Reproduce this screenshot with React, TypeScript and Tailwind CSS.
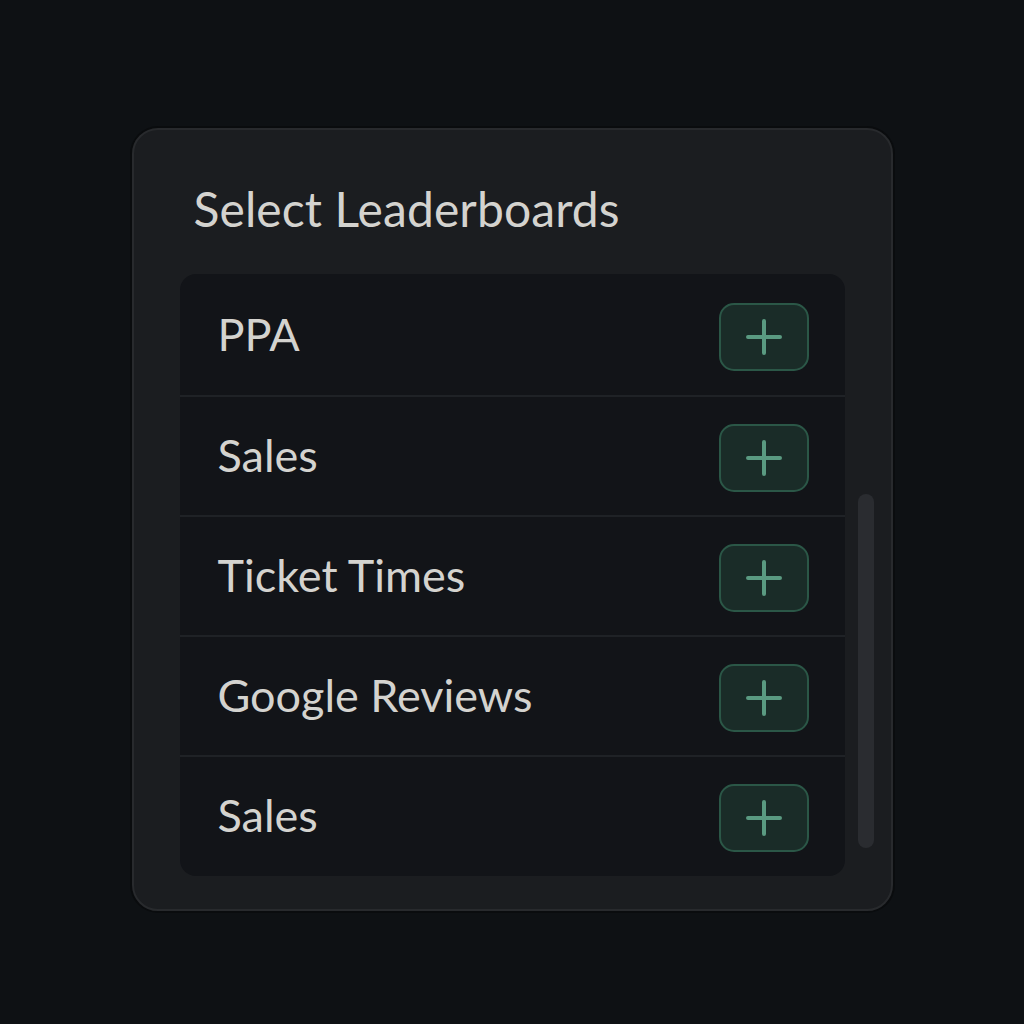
const boards = ['PPA', 'Sales', 'Ticket Times', 'Google Reviews', 'Sales']

function PlusIcon() {
  return (
    <svg width="38" height="38" viewBox="0 0 38 38" fill="none">
      <path d="M19 3v32M3 19h32" stroke="#5a9a81" strokeWidth="4" strokeLinecap="round" />
    </svg>
  )
}

export default function App() {
  return (
    <div
      className="min-h-screen w-full bg-[#0e1114] flex justify-center pt-[128px]"
      style={{ fontFamily: 'Lato, "Noto Sans", sans-serif' }}
    >
      <div className="w-[761px] h-[783px] rounded-[26px] bg-[#1b1d20] border-2 border-[#282a2d] shadow-[0_0_0_2px_#0a0c0e] pt-[55px] pl-[46px] pr-[17px]">
        <h1 className="pl-[14px] h-[48px] leading-[48px] text-[48px] text-[#d4d3cf] tracking-[0.1px]">
          Select Leaderboards
        </h1>
        <div className="flex gap-[13px] mt-[41px]">
          <div className="w-[665px] rounded-[16px] bg-[#121418] overflow-hidden py-[1px]">
            {boards.map((name, i) => (
              <div
                key={i}
                className={
                  'flex items-center justify-between h-[120px] pl-[38px] pr-[36px] ' +
                  (i > 0 ? 'border-t-2 border-[#1f2226]' : '')
                }
              >
                <span className="text-[45px] text-[#d4d3cf]">{name}</span>
                <button
                  type="button"
                  className="w-[90px] h-[68px] mt-[4px] rounded-[15px] bg-[#1a2c28] border-2 border-[#2b5747] flex items-center justify-center"
                >
                  <PlusIcon />
                </button>
              </div>
            ))}
          </div>
          <div className="pt-[220px]">
            <div className="w-[16px] h-[354px] rounded-full bg-[#2a2c30]" />
          </div>
        </div>
      </div>
    </div>
  )
}
